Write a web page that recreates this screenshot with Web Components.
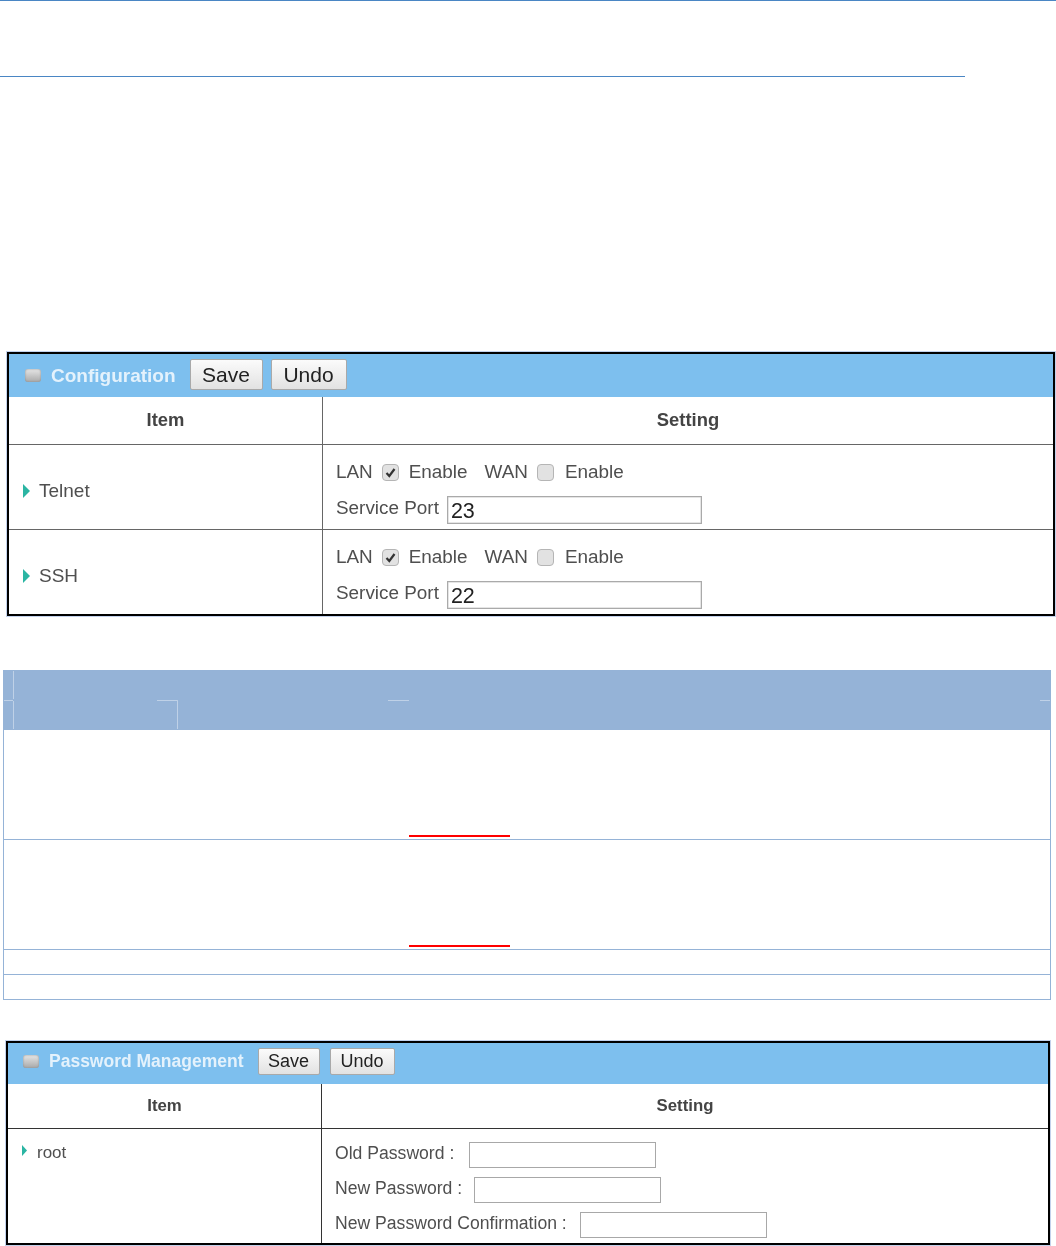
<!DOCTYPE html>
<html>
<head>
<meta charset="utf-8">
<title>Remote administration</title>
<style>
  html, body { margin: 0; background: #fff; }
  body { font-family: "Liberation Sans", Arial, sans-serif; color: #4f4f4f; height: 1246px; overflow: hidden; }
  page-rule.top { margin-top: 0; }
  page-rule.second { margin-top: 75px; width: 965px; }
  gw-panel.config {
    margin: 275px 0 0 7px; width: 1048px;
    --col: 313px; --bar: 43px; --head: 47px; --head-fs: 18.4px; --title: 19px; --btn: 21px; --bw: 73px; --bh: 31px;
    --item: 19px; --set: 18.9px; --bar-gap: 14px; --btn-gap: 8px; --btn-lift: 2px; --head-lift: 2px;
    --bar-pad: 16px; --item-lift: 7px; --aw: 7px; --ah: 14px; --blur: .25px;
  }
  spec-table { margin: 54px 0 0 3px; width: 1048px; }
  gw-panel.password {
    margin: 41px 0 0 6px; width: 1044px;
    --col: 313px; --bar: 41px; --head: 44px; --head-fs: 16.8px; --title: 17.5px; --btn: 18px; --bw: 62px; --bh: 27px;
    --item: 17px; --set: 17.6px; --bar-gap: 14px; --btn-gap: 10px; --bar-lift: 4px;
    --bar-pad: 15px; --aw: 5px; --ah: 11px; --blur: .45px; --line: #333;
  }
</style>
</head>
<body>
<page-rule class="top"></page-rule>
<page-rule class="second"></page-rule>

<gw-panel class="config">
  <span slot="title">Configuration</span>
  <gw-row>
    <span slot="item">Telnet</span>
    <gw-access port="23"></gw-access>
  </gw-row>
  <gw-row>
    <span slot="item">SSH</span>
    <gw-access port="22"></gw-access>
  </gw-row>
</gw-panel>

<spec-table></spec-table>

<gw-panel class="password">
  <span slot="title">Password Management</span>
  <gw-row top>
    <span slot="item">root</span>
    <gw-field label="Old Password :" gap="15"></gw-field>
    <gw-field label="New Password :" gap="12"></gw-field>
    <gw-field label="New Password Confirmation :" gap="13"></gw-field>
  </gw-row>
</gw-panel>

<script>
customElements.define(
  "page-rule",
  class extends HTMLElement {
    constructor() {
      super();
      const shadowRoot = this.attachShadow({ mode: "open" });
      shadowRoot.innerHTML = `
      <style>
      :host { display: block; height: 1px; background: #4a86c4; }
      </style>
    `;
    }
  }
);

customElements.define(
  "gw-panel",
  class extends HTMLElement {
    constructor() {
      super();
      const shadowRoot = this.attachShadow({ mode: "open" });
      shadowRoot.innerHTML = `
      <style>
      :host {
        display: block;
        box-sizing: border-box;
        border: 2px solid #000;
        box-shadow: 0 0 0 1px #c3d2ec;
        filter: blur(var(--blur, 0));
      }
      .bar {
        display: flex;
        align-items: center;
        box-sizing: border-box;
        height: var(--bar);
        padding-left: var(--bar-pad);
        padding-bottom: var(--bar-lift, 0);
        background: #7dbfee;
      }
      .led {
        width: 16px;
        height: 13px;
        margin-right: 10px;
        border-radius: 3px;
        background: linear-gradient(#e6e6e6, #a9a9a9);
        box-shadow: inset 0 0 2px #8a8a8a;
      }
      .title {
        font-weight: bold;
        font-size: var(--title);
        color: #e4f2fc;
        margin-right: var(--bar-gap);
      }
      button {
        box-sizing: border-box;
        width: var(--bw);
        height: var(--bh);
        margin: 0 var(--btn-gap) var(--btn-lift, 0) 0;
        padding: 0;
        font: var(--btn) "Liberation Sans", Arial, sans-serif;
        color: #222;
        background: linear-gradient(#fbfbfb, #e2e2e2);
        border: 1px solid #a9a9a9;
        border-radius: 2px;
      }
      button + button { width: calc(var(--bw) + 3px); }
      .head {
        display: grid;
        grid-template-columns: var(--col) 1fr;
        height: var(--head);
        font-weight: bold;
        font-size: var(--head-fs);
        color: #444;
      }
      .head span {
        display: flex;
        align-items: center;
        justify-content: center;
        padding-bottom: var(--head-lift, 0);
      }
      .head span + span { border-left: 1px solid var(--line, #666); }
      </style>
      <div class="bar">
        <i class="led"></i>
        <span class="title"><slot name="title"></slot></span>
        <button>Save</button><button>Undo</button>
      </div>
      <div class="head"><span>Item</span><span>Setting</span></div>
      <slot></slot>
    `;
    }
  }
);

customElements.define(
  "gw-row",
  class extends HTMLElement {
    constructor() {
      super();
      const shadowRoot = this.attachShadow({ mode: "open" });
      shadowRoot.innerHTML = `
      <style>
      :host {
        display: grid;
        grid-template-columns: var(--col) 1fr;
        border-top: 1px solid var(--line, #666);
      }
      .item {
        display: flex;
        align-items: center;
        gap: 9px;
        padding: var(--item-lift, 0) 0 0 14px;
        font-size: var(--item);
      }
      :host([top]) .item { align-items: flex-start; padding-top: 14px; gap: 10px; }
      svg { width: var(--aw); height: var(--ah); flex: none; }
      :host([top]) svg { margin-top: 2px; }
      .setting {
        border-left: 1px solid var(--line, #666);
        padding-left: 13px;
        font-size: var(--set);
      }
      :host([top]) .setting { padding: 13px 0 5px 13px; display: grid; gap: 9px; }
      </style>
      <div class="item">
        <svg viewBox="0 0 6 12" preserveAspectRatio="none"><path d="M0 0 L6 6 L0 12 Z" fill="#2bb5a3"/></svg>
        <slot name="item"></slot>
      </div>
      <div class="setting"><slot></slot></div>
    `;
    }
  }
);

customElements.define(
  "gw-check",
  class extends HTMLElement {
    constructor() {
      super();
      const shadowRoot = this.attachShadow({ mode: "open" });
      shadowRoot.innerHTML = `
      <style>
      :host {
        display: inline-flex;
        align-items: center;
        justify-content: center;
        box-sizing: border-box;
        width: 17px;
        height: 17px;
        border: 1px solid #b5b5b5;
        border-radius: 4px;
        background: #e2e2e2;
      }
      svg { width: 11px; height: 11px; display: none; }
      :host([checked]) svg { display: block; }
      </style>
      <svg viewBox="0 0 11 11"><path d="M1.5 6 L4.3 9 L9.5 2" fill="none" stroke="#333" stroke-width="2.2"/></svg>
    `;
    }
  }
);

customElements.define(
  "gw-access",
  class extends HTMLElement {
    constructor() {
      super();
      const shadowRoot = this.attachShadow({ mode: "open" });
      shadowRoot.innerHTML = `
      <style>
      :host { display: block; padding-top: 13px; height: 71px; }
      .line { display: flex; align-items: center; height: 28px; }
      gw-check { margin: 0 10px 0 9px; }
      gw-check:not([checked]) { margin-right: 11px; }
      .wan { margin-left: 17px; }
      .ports { margin-top: 10px; }
      .ports span { margin-bottom: 4px; }
      input {
        box-sizing: border-box;
        width: 255px;
        height: 28px;
        margin-left: 8px;
        padding: 2px 3px 0;
        font: 21.5px "Liberation Sans", Arial, sans-serif;
        color: #222;
        border: 1px solid #aaa;
        box-shadow: inset 0 0 0 .5px #ccc;
        outline: none;
      }
      </style>
      <div class="line">
        <span>LAN</span><gw-check checked></gw-check><span>Enable</span>
        <span class="wan">WAN</span><gw-check></gw-check><span>Enable</span>
      </div>
      <div class="line ports">
        <span>Service Port</span><input>
      </div>
    `;
      shadowRoot.querySelector("input").value = this.getAttribute("port");
    }
  }
);

customElements.define(
  "gw-field",
  class extends HTMLElement {
    constructor() {
      super();
      const shadowRoot = this.attachShadow({ mode: "open" });
      shadowRoot.innerHTML = `
      <style>
      :host { display: flex; align-items: center; height: 26px; }
      span { margin-bottom: 4px; }
      input {
        box-sizing: border-box;
        width: 187px;
        height: 26px;
        border: 1px solid #a8a8a8;
        outline: none;
      }
      </style>
      <span></span><input type="password">
    `;
      shadowRoot.querySelector("span").textContent = this.getAttribute("label");
      shadowRoot.querySelector("input").style.marginLeft = this.getAttribute("gap") + "px";
    }
  }
);

customElements.define(
  "spec-table",
  class extends HTMLElement {
    constructor() {
      super();
      const shadowRoot = this.attachShadow({ mode: "open" });
      shadowRoot.innerHTML = `
      <style>
      :host {
        display: block;
        position: relative;
        box-sizing: border-box;
        border: solid #95b3d7;
        border-width: 0 1px 1px 1px;
      }
      .head { height: 60px; margin: 0 -1px; background: #95b3d7; }
      svg { position: absolute; left: -4px; top: 0; width: 1056px; height: 60px; }
      .row { box-sizing: border-box; border-bottom: 1px solid #95b3d7; }
      .tall { height: 110px; padding-top: 105px; }
      .tall i { display: block; width: 101px; height: 2px; margin-left: 405px; background: #f00; }
      .thin { height: 25px; }
      .row:last-child { border-bottom: 0; height: 24px; }
      </style>
      <div class="head">
        <svg viewBox="0 0 1056 60" fill="none" stroke="#fff" stroke-opacity=".4">
          <path d="M13.5 1 V29 M13.5 31 V59 M4 30.5 H13"/>
          <path d="M157 30.5 H177.5 V59"/>
          <path d="M388 30.5 H409"/>
          <path d="M1040 30.5 H1050"/>
        </svg>
      </div>
      <div class="row tall"><i></i></div>
      <div class="row tall"><i></i></div>
      <div class="row thin"></div>
      <div class="row thin"></div>
    `;
    }
  }
);
</script>
</body>
</html>
